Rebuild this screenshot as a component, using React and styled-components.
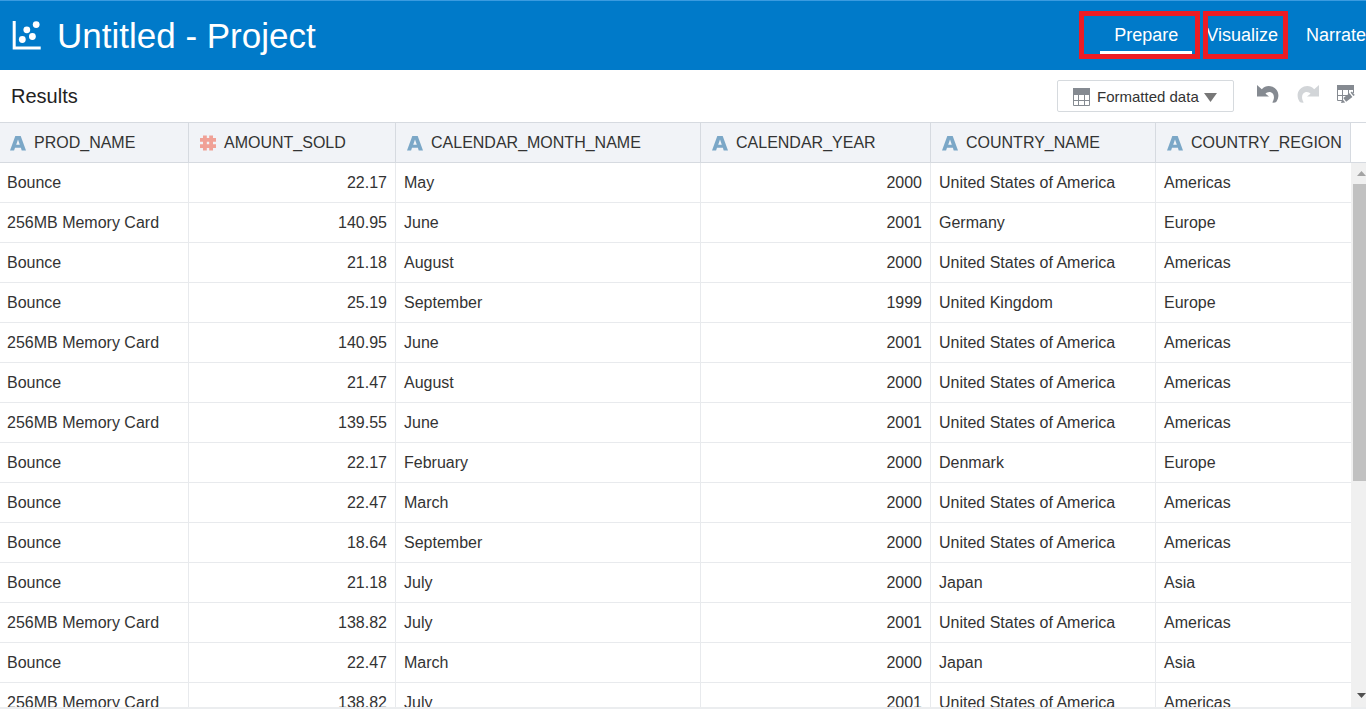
import React from "react";
import styled, { createGlobalStyle } from "styled-components";

const GlobalStyle = createGlobalStyle`
  * { box-sizing: border-box; }
  body {
    margin: 0;
    background: #fff;
    color: #333;
    font-family: "Liberation Sans", Arial, sans-serif;
    overflow: hidden;
  }
`;

const Page = styled.div`
  display: flex;
  flex-direction: column;
  height: 100vh;
`;

const Header = styled.header`
  display: flex;
  justify-content: space-between;
  height: 70px;
  flex: none;
  background: #007ac9;
  border-top: 1px solid #3a9be0;
  color: #fff;
`;

const Brand = styled.div`
  display: flex;
  align-items: center;
  gap: 15px;
  padding-left: 12px;
`;

const Title = styled.h1`
  margin: 0;
  font-size: 35px;
  line-height: 40px;
  font-weight: 400;
`;

const Nav = styled.nav`
  display: flex;
  align-items: flex-start;
`;

const Tab = styled.a`
  position: relative;
  height: 53px;
  padding: 23px 14px 0;
  border-bottom: 3px solid ${(p) => (p.$active ? "#fff" : "transparent")};
  color: #fff;
  font-size: 18px;
  line-height: 22px;
  text-decoration: none;
  &:last-child { padding-right: 0; }
`;

const Callout = styled.span`
  position: absolute;
  top: 10px;
  bottom: -8px;
  left: ${(p) => p.$left}px;
  right: ${(p) => p.$right}px;
  border: 5px solid #ed1c24;
`;

const Toolbar = styled.div`
  display: flex;
  align-items: center;
  height: 52px;
  flex: none;
  padding: 0 10px 0 11px;
`;

const Heading = styled.h2`
  flex: 1;
  margin: 0;
  color: #222;
  font-size: 20px;
  line-height: 24px;
  font-weight: 400;
`;

const Picker = styled.label`
  display: flex;
  align-items: center;
  height: 32px;
  padding: 2px 16px 0 15px;
  margin-right: 23px;
  border: 1px solid #d6dade;
  border-radius: 2px;
`;

const Select = styled.select`
  appearance: none;
  width: 107px;
  margin: 0 0 0 7px;
  padding: 0;
  border: 0;
  background: transparent;
  color: #333;
  font: 15px/20px "Liberation Sans", Arial, sans-serif;
`;

const Tools = styled.div`
  display: flex;
  gap: 18px;
  padding-bottom: 4px;
`;

const IconButton = styled.button`
  display: flex;
  padding: 0;
  border: 0;
  background: none;
  color: #858a91;
  &:disabled { color: #d2d5d8; }
`;

const Grid = styled.main`
  display: flex;
  flex: 1;
  min-height: 0;
  border-top: 1px solid #d6dae0;
`;

const Viewport = styled.div`
  flex: 1;
  min-width: 0;
  overflow: hidden;
`;

const Table = styled.table`
  width: 100%;
  table-layout: fixed;
  border-collapse: separate;
  border-spacing: 0;
`;

const Col = styled.col`
  width: ${(p) => (p.$width ? `${p.$width}px` : "auto")};
`;

const HeadCell = styled.th`
  height: 40px;
  padding: 0 0 0 11px;
  background: #f1f3f7;
  border-right: 1px solid #d6dae0;
  border-bottom: 1px solid #d6dae0;
  font-size: 16px;
  line-height: 20px;
  font-weight: 400;
  text-align: left;
  white-space: nowrap;
  &:first-child { padding-left: 10px; }
`;

const HeadLabel = styled.span`
  display: flex;
  align-items: center;
  gap: 8px;
`;

const Cell = styled.td`
  height: 40px;
  padding: 0 8px;
  border-right: 1px solid #e8eaed;
  border-bottom: 1px solid #e8eaed;
  font-size: 16px;
  line-height: 20px;
  text-align: ${(p) => (p.$numeric ? "right" : "left")};
  white-space: nowrap;
  &:first-child { padding-left: 7px; }
  &:last-child { border-right: 0; }
`;

const Rail = styled.div`
  display: flex;
  flex-direction: column;
  width: 15px;
  flex: none;
`;

const Corner = styled.div`
  height: 40px;
  flex: none;
  border-bottom: 1px solid #d6dae0;
`;

const Track = styled.div`
  display: flex;
  flex-direction: column;
  flex: 1;
  padding-left: 2px;
  background: #f0f0f0;
`;

const ArrowButton = styled.button`
  display: flex;
  align-items: center;
  justify-content: flex-end;
  height: ${(p) => p.$height}px;
  flex: none;
  padding: 0;
  border: 0;
  background: none;
  color: ${(p) => p.$color};
`;

const Thumb = styled.div`
  flex: 297;
  background: #c1c1c1;
`;

const Rest = styled.div`
  flex: 202;
`;

const Footer = styled.footer`
  height: 2px;
  flex: none;
  background: #ebedef;
`;

const LogoIcon = () => (
  <svg width="30" height="30" viewBox="0 0 30 30" fill="#fff" aria-hidden="true">
    <path d="M.7 0h3v25.500h25v3H.7z" />
    <circle cx="10.300" cy="18.500" r="3.400" />
    <circle cx="14.800" cy="8.800" r="3.400" />
    <circle cx="20.400" cy="15.500" r="3.400" />
    <circle cx="24.200" cy="3.600" r="3.400" />
  </svg>
);

const TableIcon = () => (
  <svg width="17" height="18" viewBox="0 0 17 18" aria-hidden="true">
    <path fill="#858a91" d="M0 0h17v7H0z" />
    <path fill="none" stroke="#858a91" d="M.5 6v11.500h16V6M5.500 6v11M11.500 6v11M0 12.500h17" />
  </svg>
);

const Caret = () => (
  <svg width="13" height="9" viewBox="0 0 13 9" aria-hidden="true">
    <path fill="#777" d="M0 0h13L6.500 9z" />
  </svg>
);

const UndoPath = "M0 0l4.800 4.300C7.500 1.400 11 .3 15 1.600c6 2.300 8.600 9.200 4.200 15.400-1 .6-2.700.8-4 .5 3-4.500 1.900-9-1.400-10.200-2.400-.7-4.200.3-5.300 1.500L12 11.500H0z";

const UndoIcon = () => (
  <svg width="22" height="18" viewBox="0 0 22 18" fill="currentColor" aria-hidden="true">
    <path d={UndoPath} />
  </svg>
);

const RedoIcon = () => (
  <svg width="22" height="18" viewBox="0 0 22 18" fill="currentColor" aria-hidden="true">
    <path transform="matrix(-1 0 0 1 22 0)" d={UndoPath} />
  </svg>
);

const EditTableIcon = () => (
  <svg width="19" height="19" viewBox="0 0 19 19" aria-hidden="true">
    <path fill="#858a91" d="M0 0h17v5H0z" />
    <path fill="none" stroke="#858a91" d="M.5 4v11.500h5M16.500 4v4M5.500 5v10M11.500 5v5M0 10.500h11" />
    <path fill="#858a91" d="M4 18l1.300-4 2.900 3.400zM6.300 13.100l6.200-4.800 2.900 3.600-6.200 4.800zM13.500 7.500l1.400-1 2.900 3.600-1.400 1z" />
  </svg>
);

const TextTypeIcon = () => (
  <svg width="16" height="16" viewBox="0 0 16 16" aria-hidden="true">
    <path fill="#7ba7c7" fillRule="evenodd" d="M5.300 1h5.400L16 15.500h-4.300l-.8-2.700H5l-.9 2.700H0zM8 4.500L6.200 9.700h3.600z" />
  </svg>
);

const NumberTypeIcon = () => (
  <svg width="16" height="16" viewBox="0 0 16 16" aria-hidden="true">
    <path stroke="#f0a196" strokeWidth="3.800" d="M4.900 .5v15M11.100 .5v15M0 4.900h16M0 11.100h16" />
  </svg>
);

const columns = [
  { name: "PROD_NAME", width: 189 },
  { name: "AMOUNT_SOLD", width: 207, measure: true, numeric: true },
  { name: "CALENDAR_MONTH_NAME", width: 305 },
  { name: "CALENDAR_YEAR", width: 230, numeric: true },
  { name: "COUNTRY_NAME", width: 225 },
  { name: "COUNTRY_REGION" },
];

const CARD = "256MB Memory Card";
const USA = "United States of America";

const rows = [
  ["Bounce", "22.17", "May", "2000", USA, "Americas"],
  [CARD, "140.95", "June", "2001", "Germany", "Europe"],
  ["Bounce", "21.18", "August", "2000", USA, "Americas"],
  ["Bounce", "25.19", "September", "1999", "United Kingdom", "Europe"],
  [CARD, "140.95", "June", "2001", USA, "Americas"],
  ["Bounce", "21.47", "August", "2000", USA, "Americas"],
  [CARD, "139.55", "June", "2001", USA, "Americas"],
  ["Bounce", "22.17", "February", "2000", "Denmark", "Europe"],
  ["Bounce", "22.47", "March", "2000", USA, "Americas"],
  ["Bounce", "18.64", "September", "2000", USA, "Americas"],
  ["Bounce", "21.18", "July", "2000", "Japan", "Asia"],
  [CARD, "138.82", "July", "2001", USA, "Americas"],
  ["Bounce", "22.47", "March", "2000", "Japan", "Asia"],
  [CARD, "138.82", "July", "2001", USA, "Americas"],
];

export default function App() {
  return (
    <Page>
      <GlobalStyle />
      <Header>
        <Brand>
          <LogoIcon />
          <Title>Untitled - Project</Title>
        </Brand>
        <Nav>
          <Tab href="#prepare" $active>
            Prepare
            <Callout $left={-21} $right={-8} />
          </Tab>
          <Tab href="#visualize">
            Visualize
            <Callout $left={11} $right={4} />
          </Tab>
          <Tab href="#narrate">Narrate</Tab>
        </Nav>
      </Header>
      <Toolbar>
        <Heading>Results</Heading>
        <Picker>
          <TableIcon />
          <Select aria-label="Data view" defaultValue="formatted">
            <option value="formatted">Formatted data</option>
          </Select>
          <Caret />
        </Picker>
        <Tools>
          <IconButton aria-label="Undo"><UndoIcon /></IconButton>
          <IconButton aria-label="Redo" disabled><RedoIcon /></IconButton>
          <IconButton aria-label="Edit columns"><EditTableIcon /></IconButton>
        </Tools>
      </Toolbar>
      <Grid>
        <Viewport>
          <Table>
            <colgroup>
              {columns.map((c) => <Col key={c.name} $width={c.width} />)}
            </colgroup>
            <thead>
              <tr>
                {columns.map((c) => (
                  <HeadCell key={c.name} scope="col">
                    <HeadLabel>
                      {c.measure ? <NumberTypeIcon /> : <TextTypeIcon />}
                      {c.name}
                    </HeadLabel>
                  </HeadCell>
                ))}
              </tr>
            </thead>
            <tbody>
              {rows.map((row, r) => (
                <tr key={r}>
                  {row.map((value, i) => (
                    <Cell key={columns[i].name} $numeric={columns[i].numeric}>{value}</Cell>
                  ))}
                </tr>
              ))}
            </tbody>
          </Table>
        </Viewport>
        <Rail>
          <Corner />
          <Track>
            <ArrowButton aria-label="Scroll up" $height={21} $color="#a3a3a3">
              <svg width="9" height="5" viewBox="0 0 9 5" fill="currentColor"><path d="M0 5h9L4.500 0z" /></svg>
            </ArrowButton>
            <Thumb />
            <Rest />
            <ArrowButton aria-label="Scroll down" $height={24} $color="#505050">
              <svg width="9" height="5" viewBox="0 0 9 5" fill="currentColor"><path d="M0 0h9L4.500 5z" /></svg>
            </ArrowButton>
          </Track>
        </Rail>
      </Grid>
      <Footer />
    </Page>
  );
}
